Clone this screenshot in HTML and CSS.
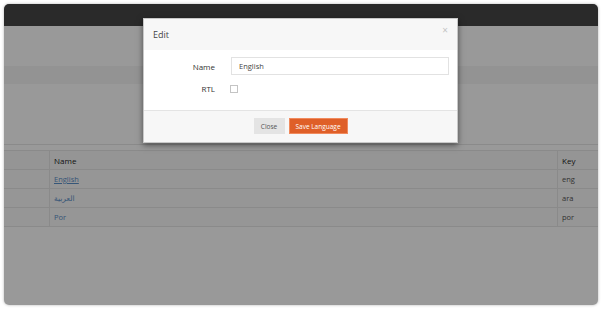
FILE: index.html
```html
<!DOCTYPE html>
<html lang="en">
<head>
    <meta charset="UTF-8">
    <title>Languages</title>
    <link rel="stylesheet" href="styles.css">
</head>
<body>
    <div class="window">
        <div class="topbar"></div>
        <div class="page-head"></div>
        <div class="subnav"></div>
        <div class="spacer"></div>
        <div class="table-wrap">
            <table class="lang-table">
                <thead>
                    <tr>
                        <th class="col-check"></th>
                        <th>Name</th>
                        <th class="col-key">Key</th>
                    </tr>
                </thead>
                <tbody>
                    <tr>
                        <td class="col-check"></td>
                        <td><a href="#" class="active-link">English</a></td>
                        <td class="col-key">eng</td>
                    </tr>
                    <tr>
                        <td class="col-check"></td>
                        <td><a href="#" lang="ar">العربية</a></td>
                        <td class="col-key">ara</td>
                    </tr>
                    <tr>
                        <td class="col-check"></td>
                        <td><a href="#">Por</a></td>
                        <td class="col-key">por</td>
                    </tr>
                </tbody>
            </table>
        </div>

        <div class="backdrop"></div>

        <div class="modal">
            <div class="modal-header">
                <span class="modal-title">Edit</span>
                <span class="modal-close">&times;</span>
            </div>
            <div class="modal-body">
                <div class="form-row">
                    <label class="form-label">Name</label>
                    <input type="text" class="form-input" value="English">
                </div>
                <div class="form-row">
                    <label class="form-label">RTL</label>
                    <span class="checkbox"></span>
                </div>
            </div>
            <div class="modal-footer">
                <button class="btn btn-default">Close</button>
                <button class="btn btn-primary">Save Language</button>
            </div>
        </div>
    </div>
</body>
</html>
```

FILE: styles.css
```css
body {
    margin: 0;
    background: #fff;
    font-family: "Open Sans", "DejaVu Sans", sans-serif;
    color: #333;
}
.window {
    position: relative;
    margin: 4px;
    height: 301px;
    border-radius: 5px;
    overflow: hidden;
    background: #fff;
    box-shadow: 0 0 3px rgba(0, 0, 0, 0.3);
}
.topbar {
    height: 22px;
    background: #464646;
}
.page-head {
    height: 40px;
}
.subnav {
    height: 18px;
    background: #f5f5f5;
}
.spacer {
    height: 60px;
}
.table-wrap {
    border-top: 1px solid #e6e6e6;
    padding-top: 5px;
}
.lang-table {
    width: 100%;
    border-collapse: collapse;
    font-size: 7.5px;
}
.lang-table th,
.lang-table td {
    height: 18px;
    padding: 0 4px;
    text-align: left;
    border-top: 1px solid #e6e6e6;
    border-bottom: 1px solid #e6e6e6;
    border-left: 1px solid #e6e6e6;
    color: #555;
}
.lang-table th {
    font-weight: 400;
    font-size: 8px;
    color: #222;
    background: #f9f9f9;
}
.lang-table tbody tr {
    background: #fafafa;
}
.lang-table .col-check {
    width: 37px;
    border-left: none;
}
.lang-table .col-key {
    width: 32px;
}
.lang-table a {
    color: #5a8fc8;
    text-decoration: none;
}
.lang-table a.active-link {
    text-decoration: underline;
}

.backdrop {
    position: absolute;
    inset: 0;
    background: rgba(0, 0, 0, 0.4);
}
.modal {
    position: absolute;
    left: 139px;
    top: 14px;
    width: 313px;
    background: #fff;
    border: 1px solid #c8c8c8;
    box-shadow: 0 2px 6px rgba(0, 0, 0, 0.5);
}
.modal-header {
    display: flex;
    justify-content: space-between;
    align-items: flex-start;
    height: 31px;
    padding: 0 9px;
    background: #f7f7f7;
}
.modal-title {
    font-size: 9px;
    line-height: 31px;
    color: #444;
}
.modal-close {
    margin-top: 6px;
    font-size: 10px;
    line-height: 10px;
    color: #c4c4c4;
}
.modal-body {
    display: flex;
    flex-direction: column;
    gap: 8px;
    padding: 7px 8px 17px 0;
    height: 36px;
}
.form-row {
    display: flex;
    align-items: center;
    gap: 16px;
}
.form-label {
    width: 71px;
    text-align: right;
    font-size: 8px;
    color: #333;
}
.form-input {
    flex: 1;
    height: 18px;
    box-sizing: border-box;
    border: 1px solid #e2e2e2;
    padding: 0 7px;
    font-family: "Open Sans", "DejaVu Sans", sans-serif;
    font-size: 7.5px;
    color: #444;
    outline: none;
}
.checkbox {
    margin: 1px 0 0 -1px;
    width: 8px;
    height: 8px;
    box-sizing: border-box;
    border: 1px solid #c4c4c4;
    background: #fff;
}
.modal-footer {
    display: flex;
    justify-content: center;
    gap: 4px;
    padding: 7px 0 8px;
    background: #f7f7f7;
    border-top: 1px solid #e4e4e4;
}
.btn {
    height: 16px;
    padding: 0;
    font-family: "Open Sans", "DejaVu Sans", sans-serif;
    font-size: 6.5px;
    white-space: nowrap;
    border: none;
    cursor: pointer;
}
.btn-default {
    background: #e4e4e4;
    color: #555;
    width: 31px;
}
.btn-primary {
    background: #df5f28;
    color: #fff;
    width: 59px;
    border: 1px solid #f08a5d;
}
```
